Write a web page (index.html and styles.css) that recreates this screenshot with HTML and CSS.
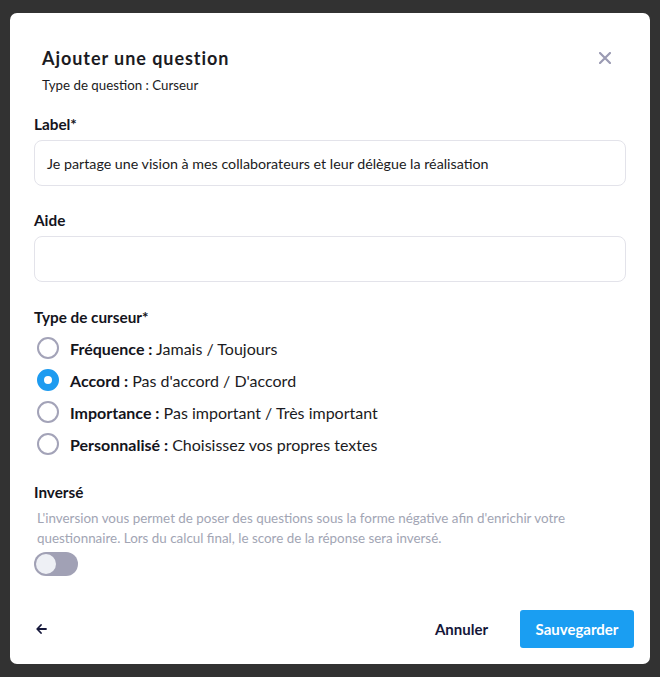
FILE: index.html
```html
<!DOCTYPE html>
<html lang="fr">
<head>
<meta charset="utf-8">
<title>Ajouter une question</title>
<link rel="stylesheet" href="styles.css">
</head>
<body>
<div class="dialog">
  <div class="header">
    <div class="titles">
      <h1 class="title">Ajouter une question</h1>
      <p class="subtitle">Type de question : Curseur</p>
    </div>
    <button class="close" aria-label="Fermer">
      <svg width="12" height="12" viewBox="0 0 12 12"><path d="M1 1 L11 11 M11 1 L1 11" stroke="#9b9bb3" stroke-width="2.2" stroke-linecap="round"/></svg>
    </button>
  </div>

  <div class="field field-first">
    <label class="label">Label*</label>
    <div class="input">Je partage une vision à mes collaborateurs et leur délègue la réalisation</div>
  </div>

  <div class="field field-aide">
    <label class="label">Aide</label>
    <div class="input"></div>
  </div>

  <div class="field field-type">
    <label class="label">Type de curseur*</label>
    <div class="radios">
      <div class="radio-row"><span class="radio"></span><span class="rtext"><b>Fréquence :</b> Jamais / Toujours</span></div>
      <div class="radio-row"><span class="radio checked"></span><span class="rtext"><b>Accord :</b> Pas d'accord / D'accord</span></div>
      <div class="radio-row"><span class="radio"></span><span class="rtext"><b>Importance :</b> Pas important / Très important</span></div>
      <div class="radio-row"><span class="radio"></span><span class="rtext"><b>Personnalisé :</b> Choisissez vos propres textes</span></div>
    </div>
  </div>

  <div class="field field-inv">
    <label class="label">Inversé</label>
    <p class="desc">L'inversion vous permet de poser des questions sous la forme négative afin d'enrichir votre questionnaire. Lors du calcul final, le score de la réponse sera inversé.</p>
    <div class="toggle"><span class="knob"></span></div>
  </div>

  <div class="footer">
    <button class="back" aria-label="Retour">
      <svg width="11" height="10" viewBox="0 0 11 10"><path d="M10 5 H1.5 M5 1 L1.2 5 L5 9" fill="none" stroke="#15173a" stroke-width="1.8" stroke-linecap="round" stroke-linejoin="round"/></svg>
    </button>
    <div class="actions">
      <button class="cancel">Annuler</button>
      <button class="save">Sauvegarder</button>
    </div>
  </div>
</div>
</body>
</html>
```

FILE: styles.css
```css
html, body {
  margin: 0;
  padding: 0;
}
body {
  background: #323232;
  font-family: Lato, "Open Sans", sans-serif;
  width: 660px;
  height: 677px;
  overflow: hidden;
  padding-top: 13px;
  box-sizing: border-box;
}
.dialog {
  margin-left: 10px;
  width: 640px;
  height: 651px;
  box-sizing: border-box;
  background: #ffffff;
  border-radius: 7px;
  padding: 33px 24px 0 24px;
  display: flex;
  flex-direction: column;
}
.header {
  display: flex;
  justify-content: space-between;
  align-items: flex-start;
  padding-left: 8px;
}
.title {
  margin: 0;
  font-size: 18px;
  line-height: 24px;
  font-weight: 700;
  letter-spacing: 0.95px;
  color: #1b1b22;
}
.subtitle {
  margin: 6px 0 0 0;
  font-size: 13.3px;
  line-height: 18px;
  color: #1b1b22;
}
.close {
  border: 0;
  background: none;
  padding: 0;
  margin: 6px 15px 0 0;
  width: 12px;
  height: 12px;
  display: flex;
}
.field {
  display: flex;
  flex-direction: column;
}
.field-first { margin-top: 20px; }
.field-aide { margin-top: 24px; }
.field-type { margin-top: 25px; }
.field-inv { margin-top: 22px; }
.label {
  font-size: 15.3px;
  line-height: 20px;
  font-weight: 700;
  color: #14141c;
}
.input {
  margin-top: 6px;
  height: 46px;
  box-sizing: border-box;
  border: 1px solid #e3e3ea;
  border-radius: 8px;
  padding: 0 12px;
  display: flex;
  align-items: center;
  font-size: 14.25px;
  color: #1b1b22;
}
.radios {
  margin-top: 5px;
  display: flex;
  flex-direction: column;
}
.radio-row {
  height: 32px;
  display: flex;
  align-items: center;
  padding-left: 3px;
}
.radio {
  width: 22px;
  height: 22px;
  box-sizing: border-box;
  border: 2px solid #a3a3b8;
  border-radius: 50%;
  flex: none;
}
.radio.checked {
  border: 7px solid #1d9bf0;
  background: #ffffff;
}
.rtext {
  margin-left: 11px;
  font-size: 16px;
  color: #1b1b22;
}
.rtext b {
  font-weight: 700;
  color: #14141c;
}
.desc {
  margin: 6px 0 0 3px;
  font-size: 13.4px;
  line-height: 20px;
  color: #a2a5b4;
  width: 570px;
}
.toggle {
  margin-top: 4px;
  width: 44px;
  height: 24px;
  border-radius: 12px;
  background: #a1a1b5;
  display: flex;
  align-items: center;
  padding-left: 2px;
  box-sizing: border-box;
}
.knob {
  width: 20px;
  height: 20px;
  border-radius: 50%;
  background: #eef0f5;
}
.footer {
  margin-top: auto;
  margin-bottom: 16px;
  margin-right: -8px;
  display: flex;
  justify-content: space-between;
  align-items: center;
}
.back {
  border: 0;
  background: none;
  padding: 0;
  margin-left: 2px;
  display: flex;
}
.actions {
  display: flex;
  align-items: center;
}
.cancel {
  border: 0;
  background: none;
  font-family: Lato, "Open Sans", sans-serif;
  font-size: 15px;
  font-weight: 700;
  color: #15173a;
  padding: 0;
  margin-right: 32px;
}
.save {
  border: 0;
  background: #1a9ef2;
  color: #ffffff;
  font-family: Lato, "Open Sans", sans-serif;
  font-size: 15px;
  font-weight: 700;
  height: 38px;
  width: 114px;
  border-radius: 3px;
  padding: 0;
}
```
